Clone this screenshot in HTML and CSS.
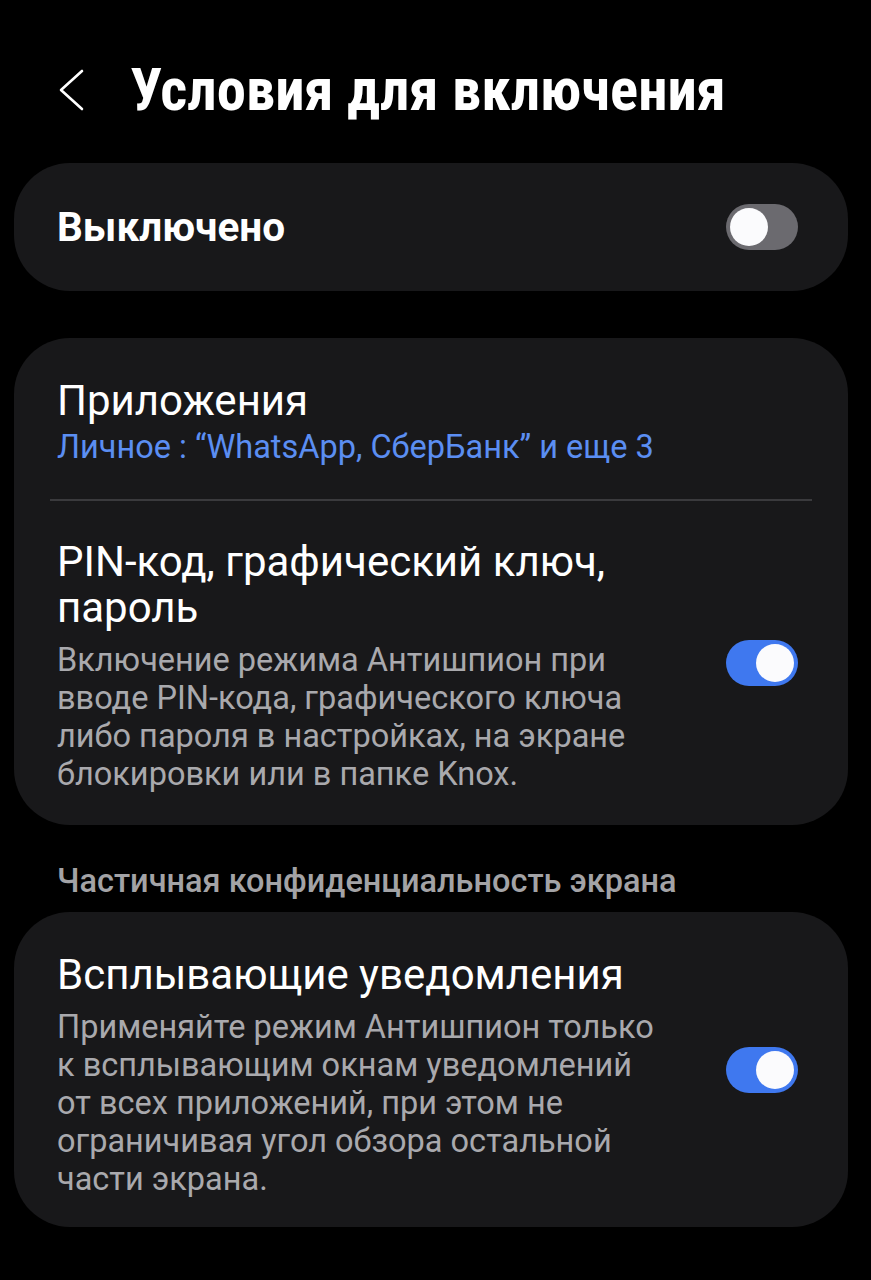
FILE: index.html
```html
<!DOCTYPE html>
<html lang="ru">
<head>
    <meta charset="UTF-8">
    <meta name="viewport" content="width=device-width, initial-scale=1.0">
    <title>Условия для включения</title>
    <link rel="stylesheet" href="styles.css">
</head>
<body>
    <header class="top-bar">
        <svg class="back" width="27" height="42" viewBox="0 0 27 42">
            <path d="M24 2 L3 21 L24 40" fill="none" stroke="#fff" stroke-width="2.6" stroke-linecap="round" stroke-linejoin="round"/>
        </svg>
        <h1 class="title">Условия для включения</h1>
    </header>

    <main class="content">
        <div class="card card-master">
            <span class="master-label">Выключено</span>
            <span class="switch"></span>
        </div>

        <div class="card card-list">
            <div class="row row-apps">
                <div class="row-text">
                    <div class="row-title">Приложения</div>
                    <div class="row-sub">Личное : “WhatsApp, СберБанк” и еще 3</div>
                </div>
            </div>
            <div class="divider"></div>
            <div class="row row-pin">
                <div class="row-text">
                    <div class="row-title">PIN-код, графический ключ,<br>пароль</div>
                    <div class="row-desc">Включение режима Антишпион при<br>вводе PIN-кода, графического ключа<br>либо пароля в настройках, на экране<br>блокировки или в папке Knox.</div>
                </div>
                <span class="switch on"></span>
            </div>
        </div>

        <div class="section-label">Частичная конфиденциальность экрана</div>

        <div class="card">
            <div class="row row-popup">
                <div class="row-text">
                    <div class="row-title">Всплывающие уведомления</div>
                    <div class="row-desc">Применяйте режим Антишпион только<br>к всплывающим окнам уведомлений<br>от всех приложений, при этом не<br>ограничивая угол обзора остальной<br>части экрана.</div>
                </div>
                <span class="switch on"></span>
            </div>
        </div>
    </main>
</body>
</html>
```

FILE: styles.css
```css
body {
    margin: 0;
    background: #000;
    color: #fff;
    font-family: Roboto, "Noto Sans", sans-serif;
}
.top-bar {
    display: flex;
    align-items: center;
    height: 163px;
    padding: 17px 0 0 58px;
    box-sizing: border-box;
}
.back {
    display: block;
}
.title {
    margin: 0 0 0 45px;
    font-size: 58.7px;
    line-height: 58px;
    font-weight: 700;
    font-stretch: 87.5%;
}
.content {
    padding: 0 23px 0 14px;
}
.card {
    background: #18181a;
    border-radius: 56px;
}
.card-master {
    display: flex;
    align-items: center;
    justify-content: space-between;
    height: 128px;
    padding: 0 50px 0 43px;
}
.card-list {
    margin-top: 47px;
}
.master-label {
    font-size: 40.5px;
    font-weight: 700;
}
.row {
    display: flex;
    align-items: center;
    justify-content: space-between;
    padding: 0 50px 0 43px;
}
.row-apps {
    padding-top: 40px;
    padding-bottom: 33px;
}
.row-pin {
    padding-top: 38px;
    padding-bottom: 32px;
}
.row-pin .switch {
    margin-bottom: 6px;
}
.row-popup {
    padding-top: 40px;
    padding-bottom: 29px;
}
.row-popup .switch {
    margin-bottom: 10px;
}
.row-title {
    font-size: 42px;
    line-height: 46px;
}
.row-sub {
    font-size: 32.5px;
    line-height: 38px;
    color: #5b8ef2;
    margin-top: 4px;
}
.row-desc {
    font-size: 32.5px;
    line-height: 38px;
    color: #a9a9ad;
    margin-top: 10px;
}
.divider {
    height: 2px;
    background: #3a3a3d;
    margin: 0 36px;
}
.section-label {
    font-size: 32.5px;
    line-height: 38px;
    font-weight: 500;
    color: #a3a3a6;
    padding: 37px 0 0 43px;
    margin-bottom: 12px;
}
.switch {
    position: relative;
    flex-shrink: 0;
    width: 72px;
    height: 46px;
    border-radius: 23px;
    background: #6b6a6f;
}
.switch::after {
    content: "";
    position: absolute;
    top: 4px;
    left: 4px;
    width: 38px;
    height: 38px;
    border-radius: 50%;
    background: #fbfbfd;
}
.switch.on {
    background: #3f78ef;
}
.switch.on::after {
    left: auto;
    right: 4px;
}
```
